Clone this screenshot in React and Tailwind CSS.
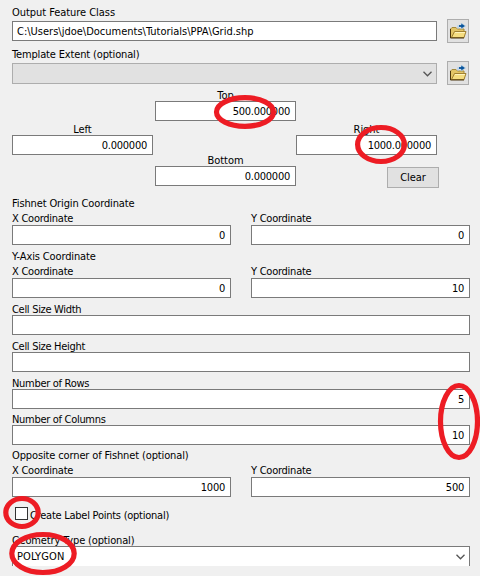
import React from 'react';

const FolderIcon = () => (
  <svg width="17" height="16" viewBox="0 0 17 16">
    <path d="M.5 14.500V6L2 4.500h4L7.500 6h6.500v8.500z" fill="#e3c566" stroke="#a4893c" />
    <path d="M1.500 14.500l3-6h11.500l-2 6z" fill="#f5dd80" stroke="#a08030" />
    <path d="M5 9.500h10" stroke="#fff3bd" />
    <path d="M.5 6v9h13.500" fill="none" stroke="#4a350c" />
    <path d="M8 5.500V3h2" fill="none" stroke="#b5d2ea" strokeWidth="1.500" />
    <path d="M11 0L15.500 3 11 6z" fill="#07529a" stroke="#c8deef" strokeWidth=".6" />
    <path d="M9 3h4" stroke="#07529a" strokeWidth="1.800" />
  </svg>
);

const Browse = () => (
  <button className="flex h-6 w-[22px] items-center justify-center border border-[#adadad] bg-[#e1e1e1]">
    <FolderIcon />
  </button>
);

const Chevron = () => (
  <svg width="9" height="6" viewBox="0 0 9 6">
    <path d="M.5 .8l4 4 4-4" fill="none" stroke="#555" strokeWidth="1.300" />
  </svg>
);

const Label = ({ children, className = 'tracking-[-0.250px]' }) => (
  <div className={`h-[14px] whitespace-nowrap pt-[2px] leading-[13px] ${className}`}>{children}</div>
);

const Field = ({ value = '', className = 'w-full' }) => (
  <div className={`flex h-5 items-center justify-end border border-[#7a7a7a] bg-white pr-[5px] pt-[2px] ${className}`}>
    <span className="leading-[14px] tracking-[-0.250px]">{value}</span>
  </div>
);

const Extent = ({ name, value, className = '' }) => (
  <div className={`w-[141px] ${className}`}>
    <Label className="text-center tracking-[-0.050px]">{name}</Label>
    <Field value={value} />
  </div>
);

const Coordinates = ({ title, x, y, className = '' }) => (
  <div className={className}>
    <Label className="tracking-[-0.130px]">{title}</Label>
    <div className="mt-px flex justify-between">
      <div className="w-[219px]">
        <Label className="mb-px">X Coordinate</Label>
        <Field value={x} />
      </div>
      <div className="w-[219px]">
        <Label className="mb-px">Y Coordinate</Label>
        <Field value={y} />
      </div>
    </div>
  </div>
);

const Row = ({ label, value, className = '' }) => (
  <div className={className}>
    <Label className="tracking-[-0.300px]">{label}</Label>
    <Field value={value} />
  </div>
);

const Marks = () => (
  <svg className="pointer-events-none absolute inset-0" width="480" height="576" fill="none" stroke="#ed1c24" strokeWidth="5.200">
    <ellipse cx="245" cy="112" rx="28.500" ry="14.300" />
    <ellipse cx="381" cy="144.500" rx="23.400" ry="17" />
    <ellipse cx="459" cy="421.500" rx="18.500" ry="36" />
    <ellipse cx="22" cy="512.500" rx="16.200" ry="14" />
    <ellipse cx="43" cy="553.500" rx="31.200" ry="19" />
  </svg>
);

export default function App() {
  return (
    <div className="relative h-[576px] w-[480px] overflow-hidden bg-[#f0f0f0] pl-3 pr-[10px] pt-1 font-['DejaVu_Sans_Condensed','DejaVu_Sans',sans-serif] text-[11px] tracking-[-0.250px] text-black [font-stretch:condensed]">
      <Label className="tracking-[-0.050px]">Output Feature Class</Label>
      <div className="mt-px flex items-center gap-[10px]">
        <div className="flex h-5 w-[425px] items-center border border-[#7a7a7a] bg-white pl-[4px] pt-px">
          <span className="leading-[14px] tracking-[0px]">C:\Users\jdoe\Documents\Tutorials\PPA\Grid.shp</span>
        </div>
        <Browse />
      </div>
      <Label className="mt-[3px] tracking-[-0.150px]">Template Extent (optional)</Label>
      <div className="mt-px flex items-center gap-[10px]">
        <div className="mt-px flex h-[21px] w-[425px] items-center justify-end border border-[#adadad] bg-[#e1e1e1] pr-1">
          <Chevron />
        </div>
        <Browse />
      </div>

      <div className="mt-[2px] flex h-[34px] pl-[143px]">
        <Extent name="Top" value="500.000000" />
      </div>
      <div className="flex h-[31px] w-[425px] justify-between">
        <Extent name="Left" value="0.000000" />
        <Extent name="Right" value="1000.000000" />
      </div>
      <div className="flex h-[40px] pl-[143px]">
        <Extent name="Bottom" value="0.000000" />
        <button className="ml-[91px] mt-[15px] flex h-[21px] w-[52px] items-center justify-center border border-[#adadad] bg-[#e1e1e1] pt-[2px] tracking-[-0.100px]">
          Clear
        </button>
      </div>

      <Coordinates title="Fishnet Origin Coordinate" x="0" y="0" className="mt-[3px]" />
      <Coordinates title="Y-Axis Coordinate" x="0" y="10" className="mt-[3px]" />
      <Row label="Cell Size Width" className="mt-[3px]" />
      <Row label="Cell Size Height" className="mt-[3px]" />
      <Row label="Number of Rows" value="5" className="mt-[3px]" />
      <Row label="Number of Columns" value="10" className="mt-[2px]" />
      <Coordinates title="Opposite corner of Fishnet (optional)" x="1000" y="500" className="mt-[2px]" />

      <div className="mt-[10px] flex h-[13px] items-center gap-[2px] pl-[3px]">
        <span className="h-[13px] w-[13px] border border-[#333] bg-white" />
        <Label>Create Label Points (optional)</Label>
      </div>
      <Label className="mt-[12px] tracking-[-0.150px]">Geometry Type (optional)</Label>
      <div className="flex h-5 items-center justify-between border border-b-0 border-[#7a7a7a] bg-white pl-[4px] pr-1">
        <span className="leading-[14px] tracking-[0.100px]">POLYGON</span>
        <Chevron />
      </div>
      <Marks />
    </div>
  );
}
